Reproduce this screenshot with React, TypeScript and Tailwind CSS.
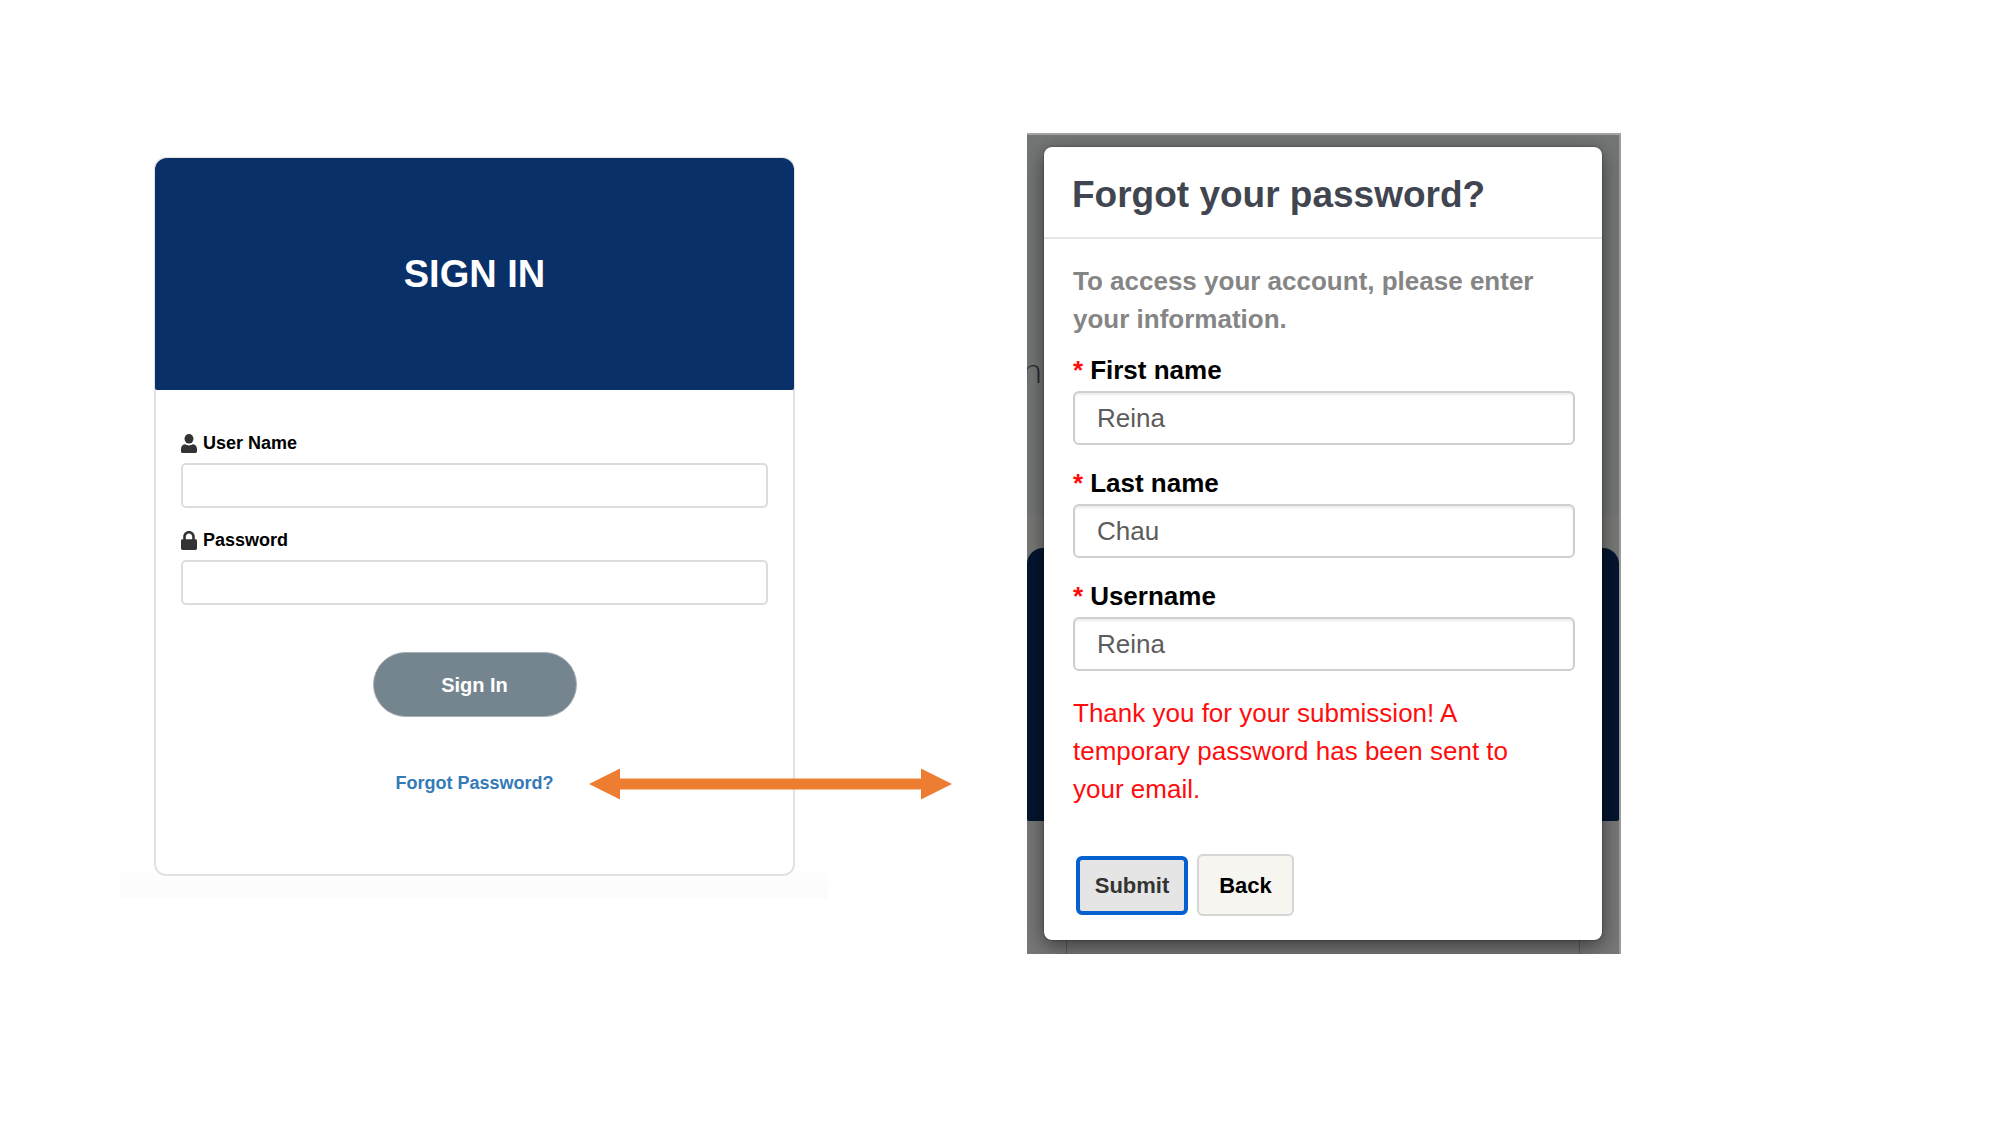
import type { ReactNode } from "react";

function UserIcon() {
  return (
    <svg viewBox="0 0 16 19" className="h-[19px] w-4 shrink-0 fill-[#333]" aria-hidden="true">
      <ellipse cx="8" cy="4.8" rx="4.5" ry="4.8" />
      <path d="M4 10.3C5.1 11 6.5 11.4 8 11.4S10.900 11 12 10.300C14.500 10.500 16 12.400 16 15V17.300C16 18.300 15.400 19 14.500 19H1.500C.6 19 0 18.300 0 17.300V15C0 12.400 1.500 10.500 4 10.300Z" />
    </svg>
  );
}

function LockIcon() {
  return (
    <svg viewBox="0 0 16 19" className="h-[19px] w-4 shrink-0 fill-[#333]" aria-hidden="true">
      <path
        fillRule="evenodd"
        d="M2.200 8.300V5.800C2.200 2.500 4.700 0 8 0S13.800 2.500 13.800 5.800V8.300H14.500C15.400 8.300 16 9 16 9.900V17.300C16 18.300 15.400 19 14.500 19H1.500C.6 19 0 18.300 0 17.300V9.900C0 9 .6 8.300 1.500 8.300ZM4.800 8.300H11.200V5.800C11.200 3.900 9.800 2.600 8 2.600S4.800 3.900 4.800 5.800Z"
      />
    </svg>
  );
}

function SignInField({ id, label, type, icon }: { id: string; label: string; type: string; icon: ReactNode }) {
  return (
    <div>
      <label htmlFor={id} className="flex h-6 items-center gap-1.5 text-lg leading-6 font-bold text-black">
        {icon}
        {label}
      </label>
      <input
        id={id}
        type={type}
        className="mt-2 block h-[45px] w-full rounded-[5px] border-2 border-[#dcdcdc] bg-white px-3 text-lg outline-none"
      />
    </div>
  );
}

function DoubleArrow() {
  return (
    <div className="absolute top-1/2 left-[68%] z-10 flex w-[57%] -translate-y-1/2 items-center">
      <svg viewBox="0 0 31 31" className="size-[31px] shrink-0 fill-[#ed7d31]" aria-hidden="true">
        <path d="M0 15.500 31 0V31Z" />
      </svg>
      <div className="h-[11px] flex-1 bg-[#ed7d31]" />
      <svg viewBox="0 0 31 31" className="size-[31px] shrink-0 fill-[#ed7d31]" aria-hidden="true">
        <path d="M31 15.500 0 0V31Z" />
      </svg>
    </div>
  );
}

function SignInCard() {
  return (
    <section className="mt-[17px] bg-linear-to-b from-white from-95% to-[#fbfbfb] pt-[7px] pr-[33px] pb-[22px] pl-[34px]">
      <div className="rounded-xl border-2 border-[#e2e2e2] bg-white">
        <header className="-mx-px -mt-px flex h-[232px] items-center justify-center rounded-t-xl rounded-b-xs bg-[#0a306a]">
          <h1 className="text-[38px] leading-none font-bold text-white">SIGN IN</h1>
        </header>
        <form className="pt-[41px] pb-[78px]" onSubmit={(e) => e.preventDefault()}>
          <div className="flex flex-col gap-5 px-[25px]">
            <SignInField id="signin-user" label="User Name" type="text" icon={<UserIcon />} />
            <SignInField id="signin-password" label="Password" type="password" icon={<LockIcon />} />
          </div>
          <div className="mt-[47px] flex justify-center">
            <button
              type="submit"
              className="h-[65px] w-[204px] rounded-full border border-[#a9b0b5] bg-[#748590] text-xl font-bold text-white"
            >
              Sign In
            </button>
          </div>
          <div className="relative mt-[54px] text-center">
            <a href="#forgot" className="text-lg leading-6 font-bold text-[#337ab7]">
              Forgot Password?
            </a>
            <DoubleArrow />
          </div>
        </form>
      </div>
    </section>
  );
}

function DimmedPage() {
  return (
    <div
      className="absolute inset-0 flex flex-col border-t-2 border-r-2 border-t-[#a4a4a4] border-r-[#9c9c9c] bg-[#777]"
      aria-hidden="true"
    >
      <div className="h-[380px] shrink-0 bg-[#737675] pt-[214px]">
        <div className="flex w-[15px] justify-end overflow-hidden font-[Lato] text-4xl font-light text-[#242a2e]">n</div>
      </div>
      <div className="h-[33px] shrink-0 bg-[#787877]" />
      <div className="bg-[#787877]">
        <div className="h-[273px] rounded-t-2xl rounded-b-xs bg-[#04152f]" />
      </div>
      <div className="mr-[39px] ml-[39px] flex-1 border-x border-[#5c5c5c]" />
    </div>
  );
}

function RecoveryField({ id, label, value }: { id: string; label: string; value: string }) {
  return (
    <div>
      <label htmlFor={id} className="flex h-8 gap-[7px] text-[26px] leading-8 font-bold text-black">
        <span className="text-[#ff0d0d]">*</span>
        {label}
      </label>
      <input
        id={id}
        type="text"
        defaultValue={value}
        className="mt-[5px] block h-[54px] w-full rounded-md border-2 border-[#cfcfcf] bg-white px-[22px] text-[26px] text-[#5c5c5c] shadow-[inset_0_2px_2px_rgba(0,0,0,0.08)] outline-none"
      />
    </div>
  );
}

function ForgotPasswordDialog() {
  return (
    <section className="relative overflow-hidden pt-[14px] pr-[19px] pb-[14px] pl-[17px]">
      <DimmedPage />
      <div
        role="dialog"
        aria-labelledby="forgot"
        className="relative rounded-lg bg-white shadow-[0_6px_20px_rgba(0,0,0,0.5),0_0_2px_rgba(0,0,0,0.5)]"
      >
        <header className="flex h-[92px] items-center border-b-2 border-[#e5e5e5] px-7 pt-1">
          <h2 id="forgot" className="text-[37px] leading-none font-bold text-[#41454f]">
            Forgot your password?
          </h2>
        </header>
        <form className="pt-[23px] pr-[27px] pb-6 pl-[29px]" onSubmit={(e) => e.preventDefault()}>
          <p className="text-[26px] leading-[38px] font-bold text-[#858585]">
            To access your account, please enter your information.
          </p>
          <div className="mt-4 flex flex-col gap-[22px]">
            <RecoveryField id="first-name" label="First name" value="Reina" />
            <RecoveryField id="last-name" label="Last name" value="Chau" />
            <RecoveryField id="username" label="Username" value="Reina" />
          </div>
          <p role="status" className="mt-[23px] pr-10 text-[26px] leading-[38px] text-[#ff0d0d]">
            Thank you for your submission! A temporary password has been sent to your email.
          </p>
          <div className="mt-[46px] flex items-center gap-[9px] pl-[3px]">
            <button
              type="submit"
              className="h-[59px] w-28 rounded-md border-4 border-[#0560d0] bg-[#e5e5e5] text-[22px] font-bold text-[#333]"
            >
              Submit
            </button>
            <button
              type="button"
              className="h-[62px] w-[97px] rounded-md border-2 border-[#d5d5d5] bg-[#f6f5f0] text-[22px] font-bold text-black"
            >
              Back
            </button>
          </div>
        </form>
      </div>
    </section>
  );
}

export default function App() {
  return (
    <main className="grid min-h-screen grid-cols-[120fr_708fr_199fr_594fr_378fr] items-start bg-white pt-[133px] font-['Liberation_Sans',Arial,sans-serif]">
      <div className="col-start-2">
        <SignInCard />
      </div>
      <div className="col-start-4">
        <ForgotPasswordDialog />
      </div>
    </main>
  );
}
